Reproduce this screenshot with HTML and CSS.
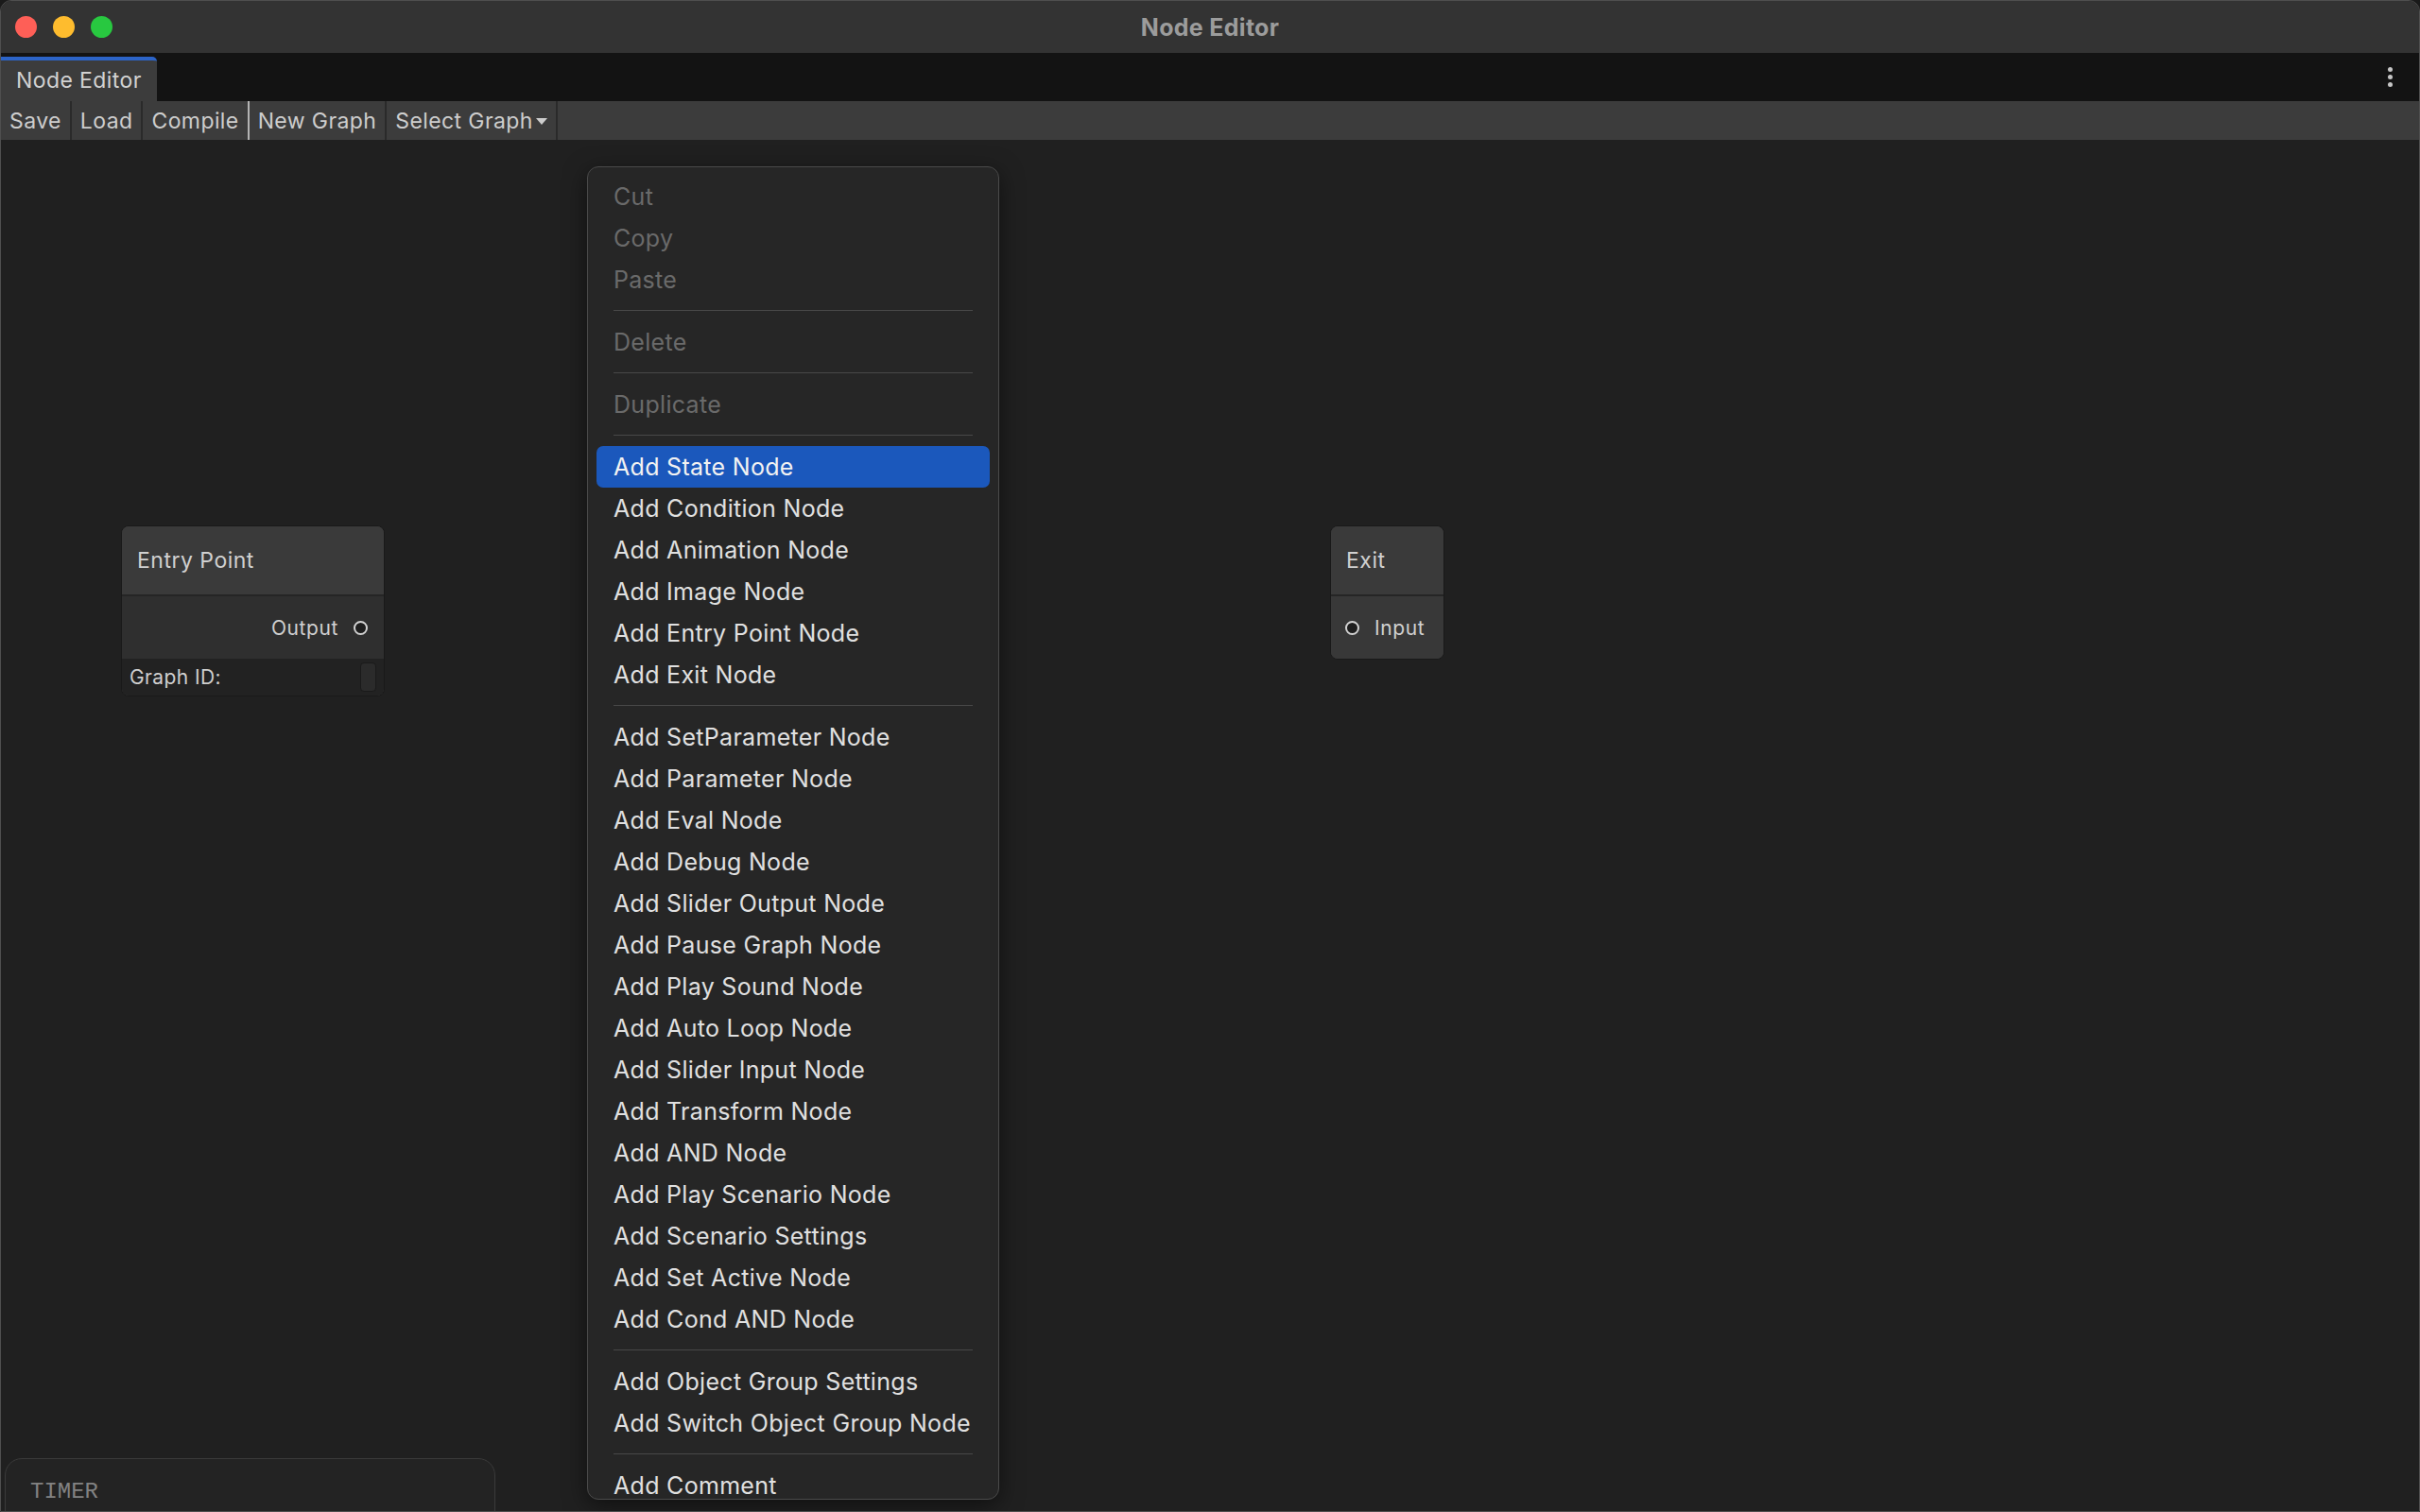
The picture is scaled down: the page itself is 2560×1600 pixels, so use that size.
FILE: index.html
```html
<!DOCTYPE html>
<html lang="en">
<head>
    <meta charset="UTF-8">
    <meta name="viewport" content="width=device-width, initial-scale=1.0">
    <title>Node Editor</title>
    <link rel="stylesheet" href="styles.css">
</head>
<body>
<div class="window">
    <!-- Title bar -->
    <div class="titlebar">
        <div class="lights">
            <span class="light red"></span>
            <span class="light yellow"></span>
            <span class="light green"></span>
        </div>
        <div class="title">Node Editor</div>
    </div>

    <!-- Tabs -->
    <div class="tabbar">
        <div class="tab">Node Editor</div>
        <div class="kebab"><span></span><span></span><span></span></div>
    </div>

    <!-- Toolbar -->
    <div class="toolbar">
        <div class="tool-btn">Save</div>
        <div class="tool-btn">Load</div>
        <div class="tool-btn focused">Compile</div>
        <div class="tool-btn">New Graph</div>
        <div class="tool-btn">Select Graph <span class="caret"></span></div>
    </div>

    <!-- Graph canvas -->
    <div class="canvas">
        <div class="node entry-node">
            <div class="node-title">Entry Point</div>
            <div class="node-body out">
                <span class="port-label">Output</span>
                <span class="port"></span>
            </div>
            <div class="node-extra">
                <span>Graph ID:</span>
                <span class="id-field"></span>
            </div>
        </div>

        <div class="node exit-node">
            <div class="node-title">Exit</div>
            <div class="node-body in">
                <span class="port"></span>
                <span class="port-label">Input</span>
            </div>
        </div>

        <div class="timer-panel">
            <div class="timer-label">TIMER</div>
        </div>

        <!-- Context menu -->
        <div class="context-menu">
            <div class="menu-item disabled">Cut</div>
            <div class="menu-item disabled">Copy</div>
            <div class="menu-item disabled">Paste</div>
            <div class="menu-sep"></div>
            <div class="menu-item disabled">Delete</div>
            <div class="menu-sep"></div>
            <div class="menu-item disabled">Duplicate</div>
            <div class="menu-sep"></div>
            <div class="menu-item active">Add State Node</div>
            <div class="menu-item">Add Condition Node</div>
            <div class="menu-item">Add Animation Node</div>
            <div class="menu-item">Add Image Node</div>
            <div class="menu-item">Add Entry Point Node</div>
            <div class="menu-item">Add Exit Node</div>
            <div class="menu-sep"></div>
            <div class="menu-item">Add SetParameter Node</div>
            <div class="menu-item">Add Parameter Node</div>
            <div class="menu-item">Add Eval Node</div>
            <div class="menu-item">Add Debug Node</div>
            <div class="menu-item">Add Slider Output Node</div>
            <div class="menu-item">Add Pause Graph Node</div>
            <div class="menu-item">Add Play Sound Node</div>
            <div class="menu-item">Add Auto Loop Node</div>
            <div class="menu-item">Add Slider Input Node</div>
            <div class="menu-item">Add Transform Node</div>
            <div class="menu-item">Add AND Node</div>
            <div class="menu-item">Add Play Scenario Node</div>
            <div class="menu-item">Add Scenario Settings</div>
            <div class="menu-item">Add Set Active Node</div>
            <div class="menu-item">Add Cond AND Node</div>
            <div class="menu-sep"></div>
            <div class="menu-item">Add Object Group Settings</div>
            <div class="menu-item">Add Switch Object Group Node</div>
            <div class="menu-sep"></div>
            <div class="menu-item">Add Comment</div>
        </div>
    </div>
</div>
</body>
</html>
```

FILE: styles.css
```css
/* Base */
html, body {
    margin: 0;
    padding: 0;
    width: 2560px;
    height: 1600px;
    overflow: hidden;
    background-color: #1a1a1a;
    font-family: "Inter", "Noto Sans", sans-serif;
}
.window {
    display: flex;
    flex-direction: column;
    width: 2560px;
    height: 1600px;
    box-sizing: border-box;
    border: 1px solid #4f4f4f;
    border-radius: 12px 12px 0 0;
    overflow: hidden;
    background-color: #202020;
}

/* Title bar */
.titlebar {
    height: 55px;
    flex-shrink: 0;
    background-color: #333333;
    display: flex;
    align-items: center;
    position: relative;
}
.lights {
    display: flex;
    gap: 17px;
    padding-left: 15px;
}
.light {
    width: 23px;
    height: 23px;
    border-radius: 50%;
}
.red { background-color: #fe5f57; }
.yellow { background-color: #febc2e; }
.green { background-color: #28c840; }
.title {
    position: absolute;
    left: 0;
    right: 0;
    text-align: center;
    font-weight: 700;
    font-size: 25px;
    letter-spacing: 0.3px;
    color: #9c9c9c;
}

/* Tabs */
.tabbar {
    height: 51px;
    flex-shrink: 0;
    background-color: #131313;
    display: flex;
    align-items: flex-end;
    justify-content: space-between;
}
.tab {
    width: 165px;
    height: 47px;
    box-sizing: border-box;
    background-color: #3c3c3c;
    border-top: 4px solid #2c64c8;
    border-top-right-radius: 5px;
    padding-left: 16px;
    font-size: 23px;
    letter-spacing: 0.4px;
    line-height: 42px;
    color: #d2d2d2;
}
.kebab {
    align-self: center;
    display: flex;
    flex-direction: column;
    gap: 3px;
    margin-right: 28px;
}
.kebab span {
    width: 5px;
    height: 5px;
    border-radius: 50%;
    background-color: #c6c6c6;
}

/* Toolbar */
.toolbar {
    height: 41px;
    flex-shrink: 0;
    background-color: #3c3c3c;
    display: flex;
}
.tool-btn {
    display: flex;
    align-items: center;
    gap: 3px;
    padding: 0 9px 0 9px;
    font-size: 23px;
    letter-spacing: 0.4px;
    color: #cdcdcd;
    border-right: 2px solid #2a2a2a;
}
.tool-btn.focused {
    border-right-color: #b4b4b4;
}
.caret {
    width: 0;
    height: 0;
    border-left: 6px solid transparent;
    border-right: 6px solid transparent;
    border-top: 7px solid #cdcdcd;
    margin-top: 2px;
}

/* Canvas */
.canvas {
    flex: 1;
    position: relative;
    background-color: #202020;
}

/* Nodes */
.node {
    position: absolute;
    top: 408px;
    box-sizing: border-box;
    border: 1px solid #191919;
    border-radius: 8px;
    overflow: hidden;
    background-color: #393939;
    color: #d0d0d0;
}
.entry-node {
    left: 127px;
    width: 279px;
}
.exit-node {
    left: 1406px;
    width: 121px;
}
.node-title {
    height: 72px;
    padding-left: 16px;
    font-size: 23px;
    letter-spacing: 0.5px;
    line-height: 72px;
    background-color: #3a3a3a;
    border-bottom: 2px solid #252525;
}
.node-body {
    height: 66px;
    display: flex;
    align-items: center;
    gap: 16px;
    font-size: 21px;
    letter-spacing: 0.6px;
}
.node-body.out {
    justify-content: flex-end;
    padding-right: 17px;
    background-color: #2f2f2f;
}
.node-body.in {
    padding-left: 15px;
    background-color: #383838;
}
.port {
    width: 11px;
    height: 11px;
    border: 2px solid #d2d2d2;
    border-radius: 50%;
    background-color: #1e1e1e;
}
.node-extra {
    height: 39px;
    display: flex;
    align-items: center;
    justify-content: space-between;
    padding: 0 8px 0 8px;
    background-color: #222222;
    font-size: 21px;
    letter-spacing: 0.4px;
    color: #cfcfcf;
}
.id-field {
    width: 15px;
    height: 29px;
    border-radius: 4px;
    background-color: #2b2b2b;
    border: 1px solid #1a1a1a;
}

/* Timer panel */
.timer-panel {
    position: absolute;
    left: 4px;
    top: 1395px;
    width: 519px;
    height: 120px;
    box-sizing: border-box;
    border: 1px solid #3a3a3a;
    border-radius: 18px;
    background-color: #232323;
    padding: 21px 26px;
}
.timer-label {
    font-family: "Liberation Mono", "DejaVu Sans Mono", monospace;
    font-size: 24px;
    color: #828282;
}

/* Context menu */
.context-menu {
    position: absolute;
    left: 620px;
    top: 28px;
    width: 436px;
    height: 1411px;
    box-sizing: border-box;
    padding-top: 9px;
    background-color: #262626;
    border: 1px solid #4a4a4a;
    border-radius: 12px;
    box-shadow: 0 6px 24px rgba(0, 0, 0, 0.5);
    overflow: hidden;
}
.menu-item {
    height: 44px;
    margin: 0 9px;
    padding-left: 18px;
    border-radius: 7px;
    font-size: 25px;
    letter-spacing: 0.3px;
    line-height: 44px;
    color: #e0e0e0;
    white-space: nowrap;
}
.menu-item.disabled {
    color: #6a6a6a;
}
.menu-item.active {
    background-color: #1b58bc;
    color: #f2f2f2;
}
.menu-sep {
    height: 1px;
    margin: 10px 27px 11px 27px;
    background-color: #484848;
}
```
